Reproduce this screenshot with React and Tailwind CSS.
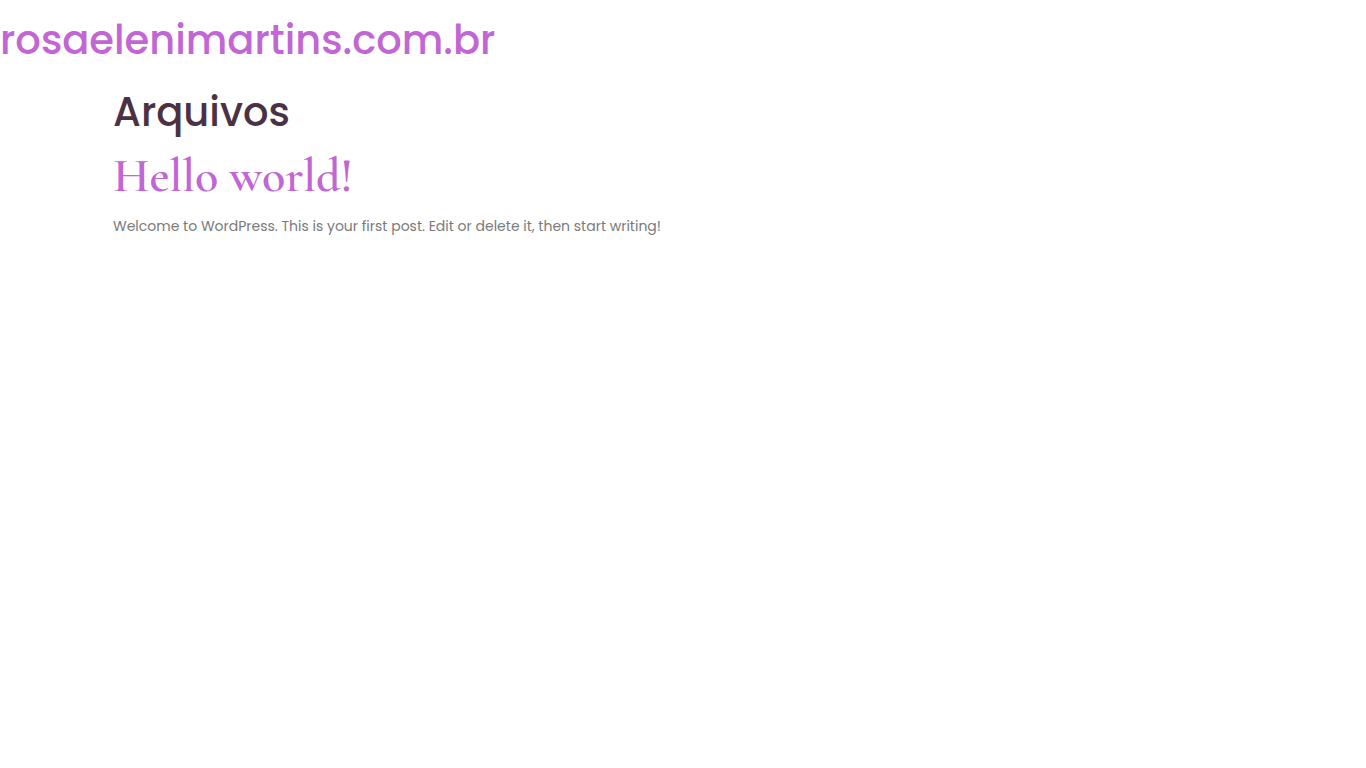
const posts = [
  {
    id: 1,
    title: "Hello world!",
    excerpt: "Welcome to WordPress. This is your first post. Edit or delete it, then start writing!",
  },
];

const App = () => {
  return (
    <div className="min-h-screen bg-white font-['Poppins','Inter',sans-serif] text-sm text-[#7a7a7a]">
      <header className="pt-4">
        <h1 className="text-[40px] leading-[48px] font-medium">
          <a href="#home" className="text-[#c166d4]">rosaelenimartins.com.br</a>
        </h1>
      </header>
      <main className="mx-auto max-w-[1140px] pt-6">
        <h1 className="text-[40px] leading-[48px] font-medium text-[#4b3144]">Arquivos</h1>
        {posts.map((post) => (
          <article key={post.id} className="pt-4">
            <h2 className="font-['Cormorant_Garamond','Liberation_Serif',serif] text-[48px] leading-[48px] font-semibold">
              <a href="#hello-world" className="text-[#c166d4]">{post.title}</a>
            </h2>
            <p className="mt-4 leading-[21px]">{post.excerpt}</p>
          </article>
        ))}
      </main>
    </div>
  );
};

export default App;
